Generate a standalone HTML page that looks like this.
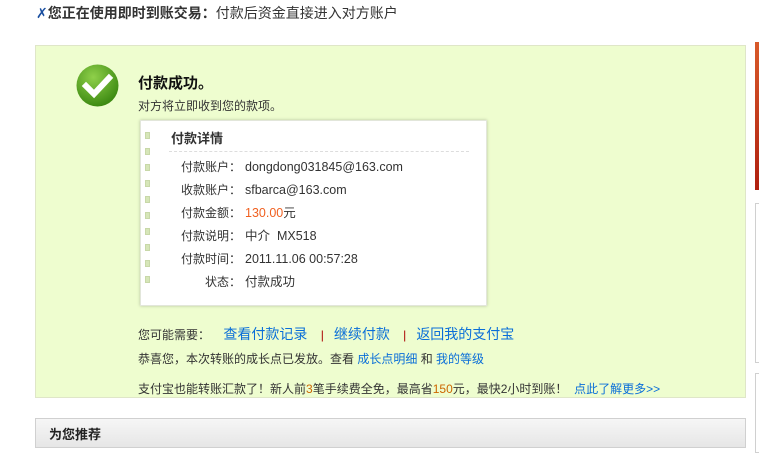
<!DOCTYPE html>
<html><head><meta charset="utf-8"><style>
*{margin:0;padding:0;box-sizing:border-box}
body{width:759px;height:443px;overflow:hidden;background:#fff;font-family:"Liberation Sans","Noto Sans CJK SC",sans-serif;color:#333;position:relative;font-size:12px}
.a{position:absolute;white-space:nowrap}
a{color:#0a6ed8;text-decoration:none}
.green{left:35px;top:45px;width:711px;height:353px;background:#eefdcf;border:1px solid #dfe6c8}
.box{left:140px;top:120px;width:347px;height:186px;background:#fff;box-shadow:0 0 3px #b8c4a0;border:1px solid #e2e6da}
.sq{position:absolute;left:4px;width:5px;height:7px;background:#d6e6b8;border:1px solid #c8d8a8}
.lbl{position:absolute;width:100px;text-align:right;left:0}
.val{position:absolute;left:104px;font-size:12.5px}
</style></head><body>
<div class="a" style="left:36px;top:4px;font-size:14px;line-height:18px;color:#333"><span style="color:#1a4fa0">✗</span><b>您正在使用即时到账交易：</b>付款后资金直接进入对方账户</div>
<div class="a green"></div>
<svg class="a" style="left:76px;top:64px" width="43" height="43" viewBox="0 0 43 43"><defs><radialGradient id="g" cx="40%" cy="30%" r="70%"><stop offset="0" stop-color="#8fd04a"/><stop offset="1" stop-color="#3d8a12"/></radialGradient></defs><circle cx="21.5" cy="21.5" r="21" fill="url(#g)"/><path d="M10 22 L18 30 L33 14" stroke="#fff" stroke-width="6" fill="none" stroke-linecap="square"/></svg>
<div class="a" style="left:138px;top:72px;font-size:15px;font-weight:bold;color:#111">付款成功。</div>
<div class="a" style="left:138px;top:97px;font-size:12px;color:#333">对方将立即收到您的款项。</div>
<div class="a box">
<div class="sq" style="top:11px"></div><div class="sq" style="top:27px"></div><div class="sq" style="top:43px"></div><div class="sq" style="top:59px"></div><div class="sq" style="top:75px"></div><div class="sq" style="top:91px"></div><div class="sq" style="top:107px"></div><div class="sq" style="top:123px"></div><div class="sq" style="top:139px"></div><div class="sq" style="top:155px"></div>
<div class="a" style="left:30px;top:7px;font-size:13px;font-weight:bold;color:#333">付款详情</div>
<div class="a" style="left:28px;top:30px;width:300px;border-top:1px dashed #ddd"></div>
<div style="position:absolute;left:0;top:35px;width:340px;font-size:12px;line-height:23px">
<div style="position:relative;height:23px"><span class="lbl">付款账户：</span><span class="val">dongdong031845@163.com</span></div>
<div style="position:relative;height:23px"><span class="lbl">收款账户：</span><span class="val">sfbarca@163.com</span></div>
<div style="position:relative;height:23px"><span class="lbl">付款金额：</span><span class="val"><span style="color:#f06020">130.00</span>元</span></div>
<div style="position:relative;height:23px"><span class="lbl">付款说明：</span><span class="val">中介&nbsp; MX518</span></div>
<div style="position:relative;height:23px"><span class="lbl">付款时间：</span><span class="val">2011.11.06 00:57:28</span></div>
<div style="position:relative;height:23px"><span class="lbl">状态：</span><span class="val">付款成功</span></div>
</div></div>
<div class="a" style="left:138px;top:325px;font-size:12px;line-height:18px">您可能需要：&nbsp;&nbsp;&nbsp;&nbsp;<a style="font-size:14px">查看付款记录</a>&nbsp;&nbsp;&nbsp;&nbsp;<span style="color:#a00">|</span>&nbsp;&nbsp;&nbsp;<a style="font-size:14px">继续付款</a>&nbsp;&nbsp;&nbsp;&nbsp;<span style="color:#a00">|</span>&nbsp;&nbsp;&nbsp;<a style="font-size:14px">返回我的支付宝</a></div>
<div class="a" style="left:138px;top:350px;font-size:12px">恭喜您，本次转账的成长点已发放。查看 <a>成长点明细</a> 和 <a>我的等级</a></div>
<div class="a" style="left:138px;top:380px;font-size:12px">支付宝也能转账汇款了！新人前<span style="color:#c60">3</span>笔手续费全免，最高省<span style="color:#c60">150</span>元，最快2小时到账！ &nbsp;<a>点此了解更多&gt;&gt;</a></div>
<div class="a" style="left:35px;top:418px;width:711px;height:30px;border:1px solid #d0d0d0;background:linear-gradient(#f6f6f6,#e6e6e6)"></div>
<div class="a" style="left:49px;top:424px;font-size:13px;font-weight:bold;color:#222">为您推荐</div>
<div class="a" style="left:755px;top:42px;width:4px;height:148px;background:linear-gradient(#d85a2a,#b02010)"></div>
<div class="a" style="left:755px;top:203px;width:4px;height:160px;border:1px solid #d0d0d0;border-right:none;background:#fff"></div>
<div class="a" style="left:755px;top:373px;width:4px;height:80px;border:1px solid #d0d0d0;border-right:none;background:#fff"></div>
</body></html>
